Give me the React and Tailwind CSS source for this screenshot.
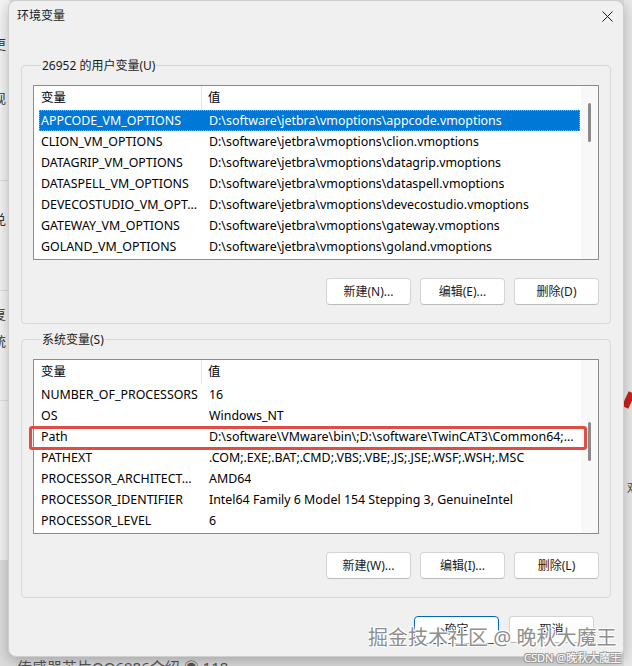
import React from 'react';

const USER_VARS = [
  ['APPCODE_VM_OPTIONS', 'D:\\software\\jetbra\\vmoptions\\appcode.vmoptions'],
  ['CLION_VM_OPTIONS', 'D:\\software\\jetbra\\vmoptions\\clion.vmoptions'],
  ['DATAGRIP_VM_OPTIONS', 'D:\\software\\jetbra\\vmoptions\\datagrip.vmoptions'],
  ['DATASPELL_VM_OPTIONS', 'D:\\software\\jetbra\\vmoptions\\dataspell.vmoptions'],
  ['DEVECOSTUDIO_VM_OPT...', 'D:\\software\\jetbra\\vmoptions\\devecostudio.vmoptions'],
  ['GATEWAY_VM_OPTIONS', 'D:\\software\\jetbra\\vmoptions\\gateway.vmoptions'],
  ['GOLAND_VM_OPTIONS', 'D:\\software\\jetbra\\vmoptions\\goland.vmoptions'],
];

const SYSTEM_VARS = [
  ['NUMBER_OF_PROCESSORS', '16'],
  ['OS', 'Windows_NT'],
  ['Path', 'D:\\software\\VMware\\bin\\;D:\\software\\TwinCAT3\\Common64;...'],
  ['PATHEXT', '.COM;.EXE;.BAT;.CMD;.VBS;.VBE;.JS;.JSE;.WSF;.WSH;.MSC'],
  ['PROCESSOR_ARCHITECT...', 'AMD64'],
  ['PROCESSOR_IDENTIFIER', 'Intel64 Family 6 Model 154 Stepping 3, GenuineIntel'],
  ['PROCESSOR_LEVEL', '6'],
];

function WinButton({ children, primary }) {
  return (
    <button
      className={`w-[85px] h-[27px] bg-white rounded-[4px] border text-[12px] text-[#1a1a1a] flex items-center justify-center ${
        primary ? 'border-[#0067c0] h-[28px]' : 'border-[#d4d4d4] border-b-[#bcbcbc]'
      }`}
    >
      {children}
    </button>
  );
}

function ListView({ rows, selected, highlighted, thumbTop }) {
  return (
    <div className="h-[175px] border border-[#8c8c8c] bg-white flex text-[12.4px]">
      <div className="flex-1 flex flex-col">
        <div className="h-[24px] flex items-center shrink-0">
          <div className="w-[168px] h-full pl-[7px] flex items-center border-r border-[#e5e5e5]">变量</div>
          <div className="pl-[6px]">值</div>
        </div>
        {rows.map(([name, value], i) => (
          <div
            key={name}
            className={`relative ml-[5px] mr-[1px] h-[21px] pt-px flex items-center whitespace-nowrap ${
              i === selected ? 'bg-[#0078d7] text-white outline-1 outline-dotted outline-[#7fb6e6] -outline-offset-1' : 'text-black'
            }`}
          >
            <div className="w-[163px] pl-[2px] overflow-hidden shrink-0">{name}</div>
            <div className="pl-[7px] overflow-hidden">{value}</div>
            {i === highlighted && (
              <div className="absolute top-0 -bottom-[3px] -left-[10px] -right-[7px] border-[3px] border-[#e14d45] rounded-[3px] z-10" />
            )}
          </div>
        ))}
      </div>
      <div className="w-[17px] bg-[#f8f8f8] flex justify-center">
        <div className={`w-[3px] h-[39px] rounded-full bg-[#8a8a8a] ${thumbTop}`} />
      </div>
    </div>
  );
}

function GroupBox({ label, rows, selected, highlighted, thumbTop, buttons }) {
  return (
    <fieldset className="mx-[12px] border border-[#d9d9d9] rounded-[4px] px-[11px] pb-[18px]">
      <legend className="ml-[8px] px-[1px] leading-[17px] text-[12px] text-[#1a1a1a]">{label}</legend>
      <div className="mt-[11px]">
        <ListView rows={rows} selected={selected} highlighted={highlighted} thumbTop={thumbTop} />
      </div>
      <div className="mt-[18px] flex justify-end gap-[9px]">
        {buttons.map((b) => (
          <WinButton key={b}>{b}</WinButton>
        ))}
      </div>
    </fieldset>
  );
}

export default function App() {
  return (
    <div
      className="relative w-[632px] h-[666px] overflow-hidden bg-[#dcdcdc] text-[12px]"
      style={{ fontFamily: '"Noto Sans", "Noto Sans CJK SC", sans-serif' }}
    >
      {/* background window fragments */}
      <div className="absolute left-0 top-0 w-[10px] h-[560px] bg-[#f3f3f3]" />
      <div className="absolute left-0 top-[180px] w-[10px] h-px bg-[#dedede]" />
      <div className="absolute left-0 top-[290px] w-[10px] h-px bg-[#dedede]" />
      <div className="absolute left-0 top-[400px] w-[10px] h-px bg-[#dedede]" />
      <div className="absolute -left-[7px] top-[35px] text-[13px] text-[#333]">更</div>
      <div className="absolute -left-[7px] top-[89px] text-[13px] text-[#333]">现</div>
      <div className="absolute -left-[7px] top-[210px] text-[13px] text-[#333]">兑</div>
      <div className="absolute -left-[7px] top-[305px] text-[13px] text-[#333]">复</div>
      <div className="absolute -left-[7px] top-[332px] text-[13px] text-[#333]">统</div>
      <div className="absolute right-0 top-0 w-[8px] h-[666px] bg-[#e8e8e8]" />
      <div className="absolute right-0 top-[392px] w-[7px] h-[16px] bg-[#c8201a] rotate-[25deg]" />
      <div className="absolute -right-[6px] top-[480px] text-[11px] text-[#444]">双</div>
      <div className="absolute left-[17px] top-[656px] text-[15px] text-[#555] whitespace-nowrap">传感器芯片QQ6986介绍 ◉ 118</div>

      {/* dialog */}
      <div className="absolute left-[8px] top-0 w-[616px] h-[657px] bg-[#f0f0f0] rounded-[8px] border border-[#cfcfcf] shadow-[0_4px_14px_rgba(0,0,0,0.25)] flex flex-col">
        <div className="h-[29px] shrink-0 flex items-center justify-between pl-[8px] pr-[10px]">
          <span className="text-[12px] text-[#1a1a1a]">环境变量</span>
          <svg width="11" height="11" viewBox="0 0 11 11" className="mt-[1px]">
            <path d="M0.5 0.5 L10.5 10.5 M10.5 0.5 L0.5 10.5" stroke="#1a1a1a" strokeWidth="1" fill="none" />
          </svg>
        </div>

        <div className="mt-[27px]">
          <GroupBox
            label="26952 的用户变量(U)"
            rows={USER_VARS}
            selected={0}
            thumbTop="mt-[17px]"
            buttons={['新建(N)...', '编辑(E)...', '删除(D)']}
          />
        </div>

        <div className="mt-[7px]">
          <GroupBox
            label="系统变量(S)"
            rows={SYSTEM_VARS}
            highlighted={2}
            thumbTop="mt-[62px]"
            buttons={['新建(W)...', '编辑(I)...', '删除(L)']}
          />
        </div>

        <div className="mt-[18px] pr-[29px] flex justify-end gap-[10px]">
          <WinButton primary>确定</WinButton>
          <WinButton>取消</WinButton>
        </div>
      </div>

      {/* watermarks */}
      <div className="absolute left-[368px] top-[623px] text-[20px] text-[#8f8f8f] whitespace-nowrap [text-shadow:-1px_-1px_0_#fff,1px_-1px_0_#fff,-1px_1px_0_#fff,1px_1px_0_#fff]">
        掘金技术社区 @ 晚秋大魔王
      </div>
      <div className="absolute left-[524px] top-[650px] text-[11px] text-white whitespace-nowrap [text-shadow:-1px_-1px_0_#999,1px_-1px_0_#999,-1px_1px_0_#999,1px_1px_0_#999]">
        CSDN @晚秋大魔王
      </div>
    </div>
  );
}
